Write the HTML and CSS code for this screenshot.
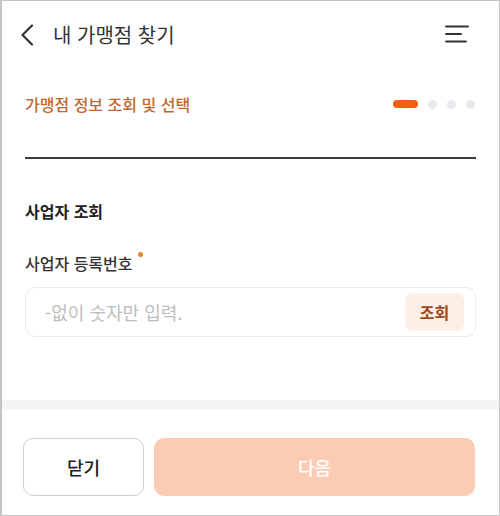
FILE: index.html
```html
<!DOCTYPE html>
<html lang="ko">
<head>
    <meta charset="UTF-8">
    <meta name="viewport" content="width=device-width, initial-scale=1.0">
    <title>내 가맹점 찾기</title>
    <link rel="stylesheet" href="styles.css">
</head>
<body>
    <div class="screen">
        <header class="top-bar">
            <button class="back" aria-label="뒤로">
                <svg width="14" height="22" viewBox="0 0 14 22">
                    <path d="M12 1.5 L2.5 11 L12 20.5" fill="none" stroke="#333" stroke-width="2.2" stroke-linecap="round" stroke-linejoin="round"/>
                </svg>
            </button>
            <h1>내 가맹점 찾기</h1>
            <button class="menu" aria-label="메뉴">
                <svg width="24" height="18" viewBox="0 0 24 18">
                    <path d="M1 1.5 H23 M1 9 H16 M1 16.5 H21" stroke="#333" stroke-width="2" stroke-linecap="round"/>
                </svg>
            </button>
        </header>

        <main class="content">
            <div class="step">
                <h2>가맹점 정보 조회 및 선택</h2>
                <div class="progress">
                    <span class="bar"></span>
                    <span class="dot"></span>
                    <span class="dot"></span>
                    <span class="dot"></span>
                </div>
            </div>
            <hr class="divider">

            <h3 class="section-title">사업자 조회</h3>
            <label class="field-label" for="biz-no">사업자 등록번호<span class="required"></span></label>
            <div class="input-box">
                <input id="biz-no" type="text" placeholder="-없이 숫자만 입력.">
                <button class="search">조회</button>
            </div>
        </main>

        <div class="band"></div>

        <footer class="actions">
            <button class="btn-close">닫기</button>
            <button class="btn-next" disabled>다음</button>
        </footer>
    </div>
</body>
</html>
```

FILE: styles.css
```css
* {
    box-sizing: border-box;
}

body {
    margin: 0;
    font-family: "Noto Sans CJK KR", "Noto Sans", sans-serif;
    background-color: #fff;
    color: #222;
}

.screen {
    width: 500px;
    height: 516px;
    border: 1px solid #c4c4c4;
    border-left-width: 2px;
    display: flex;
    flex-direction: column;
}

button {
    font-family: inherit;
    border: none;
    background: none;
    padding: 0;
    cursor: pointer;
}

.top-bar {
    height: 67px;
    display: flex;
    align-items: center;
    padding: 0 30px 0 18px;
}

.back {
    display: flex;
    margin-top: 1px;
}

.top-bar h1 {
    flex: 1;
    margin: 0 0 0 19px;
    font-size: 20px;
    font-weight: 400;
    color: #333;
    line-height: 28px;
}

.menu {
    display: flex;
    margin-top: -1px;
}

.content {
    padding: 0 23px 0 23px;
}

.step {
    margin-top: 24px;
    display: flex;
    align-items: center;
    justify-content: space-between;
}

.step h2 {
    margin: 0;
    font-size: 16px;
    font-weight: 500;
    line-height: 24px;
    color: #bf672e;
}

.progress {
    display: flex;
    align-items: center;
    gap: 10px;
    margin-right: 1px;
}

.bar {
    width: 25px;
    height: 8px;
    border-radius: 4px;
    background-color: #f0600e;
}

.dot {
    width: 9px;
    height: 9px;
    border-radius: 50%;
    background-color: #e8e8ee;
}

.divider {
    margin: 41px 0 0;
    border: none;
    border-top: 2px solid #3c3c3c;
}

.section-title {
    margin: 40px 0 0;
    font-size: 16px;
    font-weight: 700;
    line-height: 24px;
    color: #222;
}

.field-label {
    display: block;
    margin-top: 28px;
    font-size: 16px;
    font-weight: 500;
    line-height: 24px;
    color: #333;
    position: relative;
}

.required {
    position: absolute;
    top: 1px;
    margin-left: 5px;
    width: 5px;
    height: 5px;
    border-radius: 50%;
    background-color: #e8892e;
}

.input-box {
    margin-top: 12px;
    height: 50px;
    border: 1px solid #ececec;
    border-radius: 10px;
    display: flex;
    align-items: center;
    padding: 0 11px 0 17px;
}

.input-box input {
    flex: 1;
    border: none;
    outline: none;
    font-family: inherit;
    font-size: 18px;
    color: #333;
    background: none;
}

.input-box input::placeholder {
    color: #bdbdbd;
}

.search {
    width: 59px;
    height: 38px;
    border-radius: 8px;
    background-color: #fdeee6;
    color: #9c4a1c;
    font-size: 16px;
    font-weight: 700;
}

.band {
    margin-top: 63px;
    height: 10px;
    background-color: #f5f5f5;
}

.actions {
    display: flex;
    gap: 10px;
    padding: 28px 24px 0 21px;
}

.btn-close,
.btn-next {
    height: 58px;
    border-radius: 10px;
    font-size: 18px;
    font-weight: 500;
}

.btn-close {
    width: 121px;
    border: 1px solid #cfcfcf;
    color: #222;
    background-color: #fff;
}

.btn-next {
    flex: 1;
    background-color: #fccbb3;
    color: #fff;
}
```
